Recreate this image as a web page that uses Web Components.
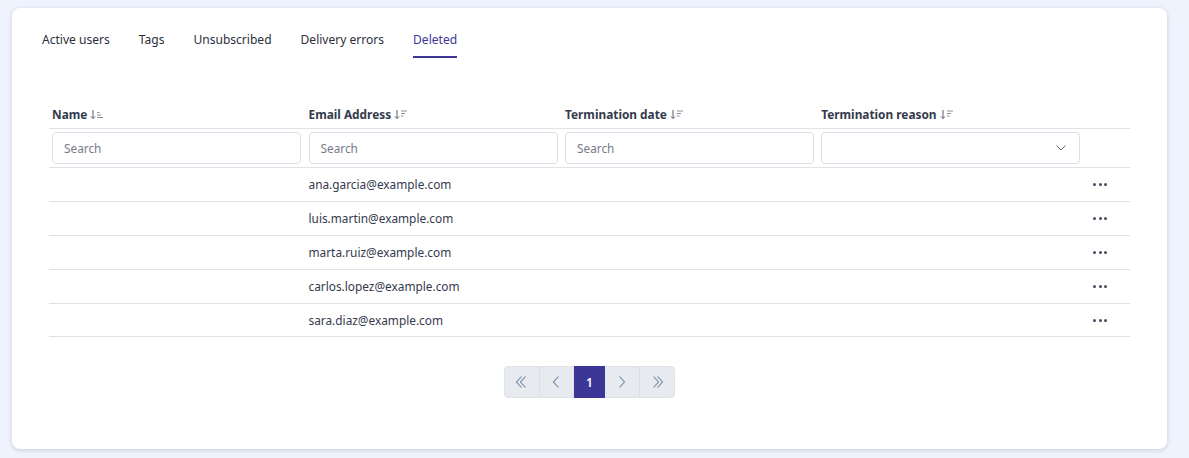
<!DOCTYPE html>
<html>
<head>
<meta charset="utf-8">
<title>Deleted users</title>
<style>
  html, body { margin: 0; height: 100%; background: #eff3fd; overflow: hidden; }
  body { font-family: "Noto Sans", "Open Sans", sans-serif; color: #343a4d; }
</style>
</head>
<body>
<user-page>
  <tab-bar></tab-bar>
  <users-table></users-table>
  <page-nav></page-nav>
</user-page>

<script>
class UserPage extends HTMLElement {
  connectedCallback() {
    this.attachShadow({ mode: 'open' });
    this.shadowRoot.innerHTML = `
      <style>
        :host { display: block; padding: 8px 22px 9px 12px; box-sizing: border-box; height: 458px; }
        .card {
          background: #fff;
          border-radius: 8px;
          box-shadow: 0 1px 4px rgba(60,70,110,0.22);
          height: 441px;
          box-sizing: border-box;
          padding: 14px 37px 0 30px;
        }
      </style>
      <div class="card"><slot></slot></div>
    `;
  }
}

class TabBar extends HTMLElement {
  connectedCallback() {
    this.attachShadow({ mode: 'open' });
    const tabs = ['Active users', 'Tags', 'Unsubscribed', 'Delivery errors', 'Deleted'];
    this.shadowRoot.innerHTML = `
      <style>
        :host { display: block; }
        .tabs { display: flex; gap: 29px; }
        .tab {
          font-size: 12.05px;
          line-height: 18px;
          padding: 9px 0 7px;
          color: #2b2f3a;
          border-bottom: 2px solid transparent;
        }
        .tab.active { color: #3c3796; border-bottom-color: #3c3796; }
      </style>
      <div class="tabs">
        ${tabs.map(t => `<div class="tab ${t === 'Deleted' ? 'active' : ''}">${t}</div>`).join('')}
      </div>
    `;
  }
}

const sortAsc = `<svg width="13" height="11" viewBox="0 0 13 11" fill="none" stroke-width="1">
  <path stroke="#5a5f6e" d="M3 1v8.5M1 7.500l2 2 2-2"/><path stroke="#8a8f9c" d="M7 3.500h2.500M7 6h4M7 8.500h6"/></svg>`;
const sortDesc = `<svg width="13" height="11" viewBox="0 0 13 11" fill="none" stroke-width="1">
  <path stroke="#5a5f6e" d="M3 1v8.500M1 7.500l2 2 2-2"/><path stroke="#8a8f9c" d="M7 2h6M7 4.500h4M7 7h2.500"/></svg>`;

class UsersTable extends HTMLElement {
  connectedCallback() {
    this.attachShadow({ mode: 'open' });
    const heads = [['Name', sortAsc], ['Email Address', sortDesc], ['Termination date', sortDesc], ['Termination reason', sortDesc]];
    const emails = ['ana.garcia@example.com', 'luis.martin@example.com', 'marta.ruiz@example.com', 'carlos.lopez@example.com', 'sara.diaz@example.com'];
    this.shadowRoot.innerHTML = `
      <style>
        :host { display: block; margin: 47px 0 0 7px; }
        .row {
          display: grid;
          grid-template-columns: 256.5px 256.5px 256.2px 266.3px 1fr;
          border-bottom: 1px solid #dfe1e6;
          align-items: center;
        }
        .head { height: 22px; padding-top: 1px; align-items: start; }
        .head .cell { display: flex; align-items: center; gap: 3px; padding-left: 3px; font-size: 11.85px; line-height: 17px; font-weight: 700; color: #343a4d; }
        .filters { height: 38px; }
        .filters .cell { padding-left: 3px; padding-right: 4.5px; }
        .field {
          height: 32px;
          box-sizing: border-box;
          border: 1px solid #dcdfe6;
          border-radius: 4px;
          padding: 0 13px 0 11px;
          display: flex;
          align-items: center;
          justify-content: space-between;
          font-size: 11.8px;
          color: #767b8a;
        }
        .body { height: 33px; font-size: 11.85px; color: #343a4d; }
        .body .cell { padding-left: 3px; padding-bottom: 1px; }
        .body.last { height: 32px; }
        .body.last .cell { padding-bottom: 0; }
        .dots { display: flex; justify-content: center; gap: 2.5px; padding-right: 14px; }
        .dots i { width: 3px; height: 3px; border-radius: 50%; background: #454b5c; }
      </style>
      <div class="row head">
        ${heads.map(h => `<div class="cell">${h[0]} ${h[1]}</div>`).join('')}<div></div>
      </div>
      <div class="row filters">
        <div class="cell"><div class="field">Search</div></div>
        <div class="cell"><div class="field">Search</div></div>
        <div class="cell"><div class="field">Search</div></div>
        <div class="cell"><div class="field">
          <span></span>
          <svg width="10" height="6" viewBox="0 0 10 6" fill="none" stroke="#5d6272" stroke-width="1"><path d="M.5 .5L5 5 9.500 .5"/></svg>
        </div></div>
        <div></div>
      </div>
      ${emails.map((e, i) => `
        <div class="row body ${i === 4 ? 'last' : ''}">
          <div class="cell"></div><div class="cell">${e}</div><div class="cell"></div><div class="cell"></div>
          <div class="dots"><i></i><i></i><i></i></div>
        </div>`).join('')}
    `;
  }
}

class PageNav extends HTMLElement {
  connectedCallback() {
    this.attachShadow({ mode: 'open' });
    const icon = d => `<svg width="14" height="14" viewBox="0 0 14 14" fill="none" stroke="#6f88a5" stroke-width="1.1"><path d="${d}"/></svg>`;
    this.shadowRoot.innerHTML = `
      <style>
        :host { display: flex; justify-content: center; margin: 29px 0 0 7px; }
        .nav {
          display: flex;
          height: 32px;
          box-sizing: border-box;
          background: #e7eaee;
          border: 1px solid #dfe3e8;
          border-radius: 4px;
        }
        .btn { width: 34.5px; box-sizing: border-box; display: flex; align-items: center; justify-content: center; border-right: 1px solid #dde1e6; }
        .btn:last-child { border-right: 0; }
        .cur { width: 31px; margin: -1px 0; background: #3c3796; color: #fff; font-size: 12px; font-weight: 600; border-right: 0; }
      </style>
      <div class="nav">
        <div class="btn">${icon('M6.500 1.500L1.500 7 6.500 12.500M10.500 1.500L5.500 7 10.500 12.500')}</div>
        <div class="btn">${icon('M9.500 1.500L4.500 7 9.500 12.500')}</div>
        <div class="btn cur">1</div>
        <div class="btn">${icon('M4.500 1.500L9.500 7 4.500 12.500')}</div>
        <div class="btn">${icon('M3.500 1.500L8.500 7 3.500 12.500M7.500 1.500L12.500 7 7.500 12.500')}</div>
      </div>
    `;
  }
}

customElements.define('user-page', UserPage);
customElements.define('tab-bar', TabBar);
customElements.define('users-table', UsersTable);
customElements.define('page-nav', PageNav);
</script>
</body>
</html>
